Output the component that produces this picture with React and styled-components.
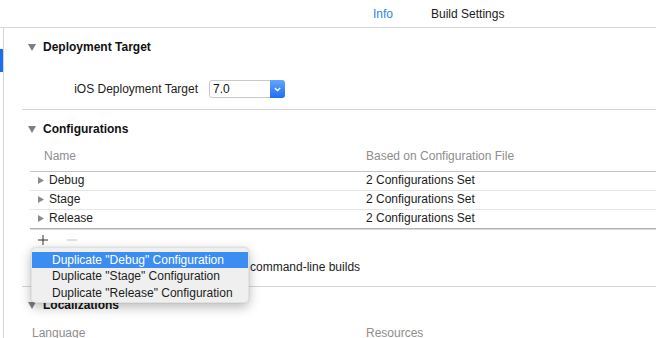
import React from 'react';
import styled, { createGlobalStyle } from 'styled-components';

const Global = createGlobalStyle`
  html, body { margin: 0; padding: 0; background: #fff; }
  body {
    font-family: "Liberation Sans", Arial, sans-serif;
    font-size: 12px;
    color: #1c1c1c;
  }
  #root { width: 656px; height: 338px; overflow: hidden; }
`;

const Window = styled.div`
  position: relative;
  width: 656px;
  height: 338px;
  overflow: hidden;
  display: flex;
  flex-direction: column;
  background: #fff;
`;

const TabBar = styled.div`
  height: 27px;
  flex-shrink: 0;
  border-bottom: 1px solid #d6d6d6;
  display: flex;
  align-items: center;
  gap: 38px;
  padding-left: 373px;
`;

const Tab = styled.div`
  font-size: 12px;
  color: ${p => (p.$active ? '#2b84f4' : '#1a1a1a')};
`;

const Body = styled.div`
  flex: 1;
  display: flex;
  min-height: 0;
`;

const Gutter = styled.div`
  width: 3px;
  flex-shrink: 0;
  border-right: 1px solid #d6d6d6;
  padding-top: 21px;
`;

const Marker = styled.div`
  width: 3px;
  height: 23px;
  background: #1a6ff0;
`;

const Content = styled.div`
  flex: 1;
  padding-left: 18px;
  display: flex;
  flex-direction: column;
`;

const Section = styled.section`
  padding-top: ${p => p.$pt}px;
  padding-bottom: ${p => p.$pb}px;
  border-bottom: ${p => (p.$last ? 'none' : '1px solid #d6d6d6')};
  display: flex;
  flex-direction: column;
`;

const SectionHeader = styled.div`
  height: 20px;
  display: flex;
  align-items: center;
  gap: 7px;
  padding-left: 6px;
`;

const SectionTitle = styled.div`
  font-weight: bold;
  font-size: 12px;
  color: #111;
`;

const DownTri = () => (
  <svg width="8" height="7" viewBox="0 0 8 7">
    <polygon points="0,0 8,0 4,7" fill="#7e7e7e" />
  </svg>
);

const RightTri = () => (
  <svg width="6" height="7" viewBox="0 0 6 7">
    <polygon points="0,0 6,3.5 0,7" fill="#8a8a8a" />
  </svg>
);

const FormRow = styled.div`
  margin-top: 23px;
  height: 18px;
  display: flex;
  align-items: center;
  gap: 11px;
`;

const FormLabel = styled.div`
  width: 176px;
  text-align: right;
  color: #1c1c1c;
`;

const Select = styled.div`
  width: 76px;
  height: 18px;
  box-sizing: border-box;
  border: 1px solid #c8c8c8;
  border-radius: 3px;
  display: flex;
  align-items: stretch;
  background: #fff;
`;

const SelectValue = styled.div`
  flex: 1;
  padding-left: 3px;
  display: flex;
  align-items: center;
  color: #111;
`;

const SelectButton = styled.div`
  width: 15px;
  margin: -1px -1px -1px 0;
  border-radius: 0 3px 3px 0;
  background: linear-gradient(#62a6fb, #1d6ff5);
  display: flex;
  align-items: center;
  justify-content: center;
`;

const ColumnHeader = styled.div`
  margin-top: ${p => p.$mt}px;
  height: 20px;
  display: grid;
  grid-template-columns: ${p => p.$first}px 1fr;
  align-items: center;
  color: #8e8e8e;
  padding-left: ${p => p.$pl}px;
`;

const Rows = styled.div`
  margin-top: 5px;
  margin-left: 8px;
  border-top: 1px solid #c4c4c4;
`;

const Row = styled.div`
  height: 18px;
  display: grid;
  grid-template-columns: 328px 1fr;
  align-items: center;
  padding-left: 8px;
  border-bottom: 1px solid ${p => (p.$last ? '#b2b2b2' : '#e6e6e6')};
  box-shadow: ${p => (p.$last ? '0 1px 0 #d9d9d9' : 'none')};
`;

const NameCell = styled.div`
  display: flex;
  align-items: center;
  gap: 5px;
  margin-top: -2px;
`;

const ValueCell = styled.div`
  margin-top: -2px;
`;

const Controls = styled.div`
  margin-top: 1px;
  height: 20px;
  display: flex;
  align-items: center;
  gap: 19px;
  padding-left: 16px;
`;

const Sign = ({ plus, color }) => (
  <svg width="10" height="10" viewBox="0 0 10 10">
    <line x1="0" y1="5" x2="10" y2="5" stroke={color} strokeWidth="1" />
    {plus && <line x1="5" y1="0" x2="5" y2="10" stroke={color} strokeWidth="1" />}
  </svg>
);

const CommandRow = styled.div`
  margin-top: 8px;
  height: 18px;
  display: flex;
  align-items: center;
  padding-left: 228px;
`;

const Menu = styled.div`
  position: absolute;
  left: 31px;
  top: 247px;
  width: 218px;
  height: 56px;
  box-sizing: border-box;
  padding: 4px 0 1px;
  border-radius: 5px;
  background: rgba(239, 239, 239, 0.98);
  border: 1px solid rgba(0, 0, 0, 0.06);
  box-shadow: 0 4px 12px rgba(0, 0, 0, 0.28), 0 0 1px rgba(0, 0, 0, 0.3);
  display: flex;
  flex-direction: column;
`;

const MenuItem = styled.div`
  height: 17px;
  display: flex;
  align-items: center;
  padding-left: 20px;
  font-size: 12px;
  color: ${p => (p.$active ? '#fff' : '#1c1c1c')};
  background: ${p => (p.$active ? '#3c8df2' : 'transparent')};
`;

const configs = ['Debug', 'Stage', 'Release'];

export default function App() {
  return (
    <Window>
      <Global />
      <TabBar>
        <Tab $active>Info</Tab>
        <Tab>Build Settings</Tab>
      </TabBar>
      <Body>
        <Gutter>
          <Marker />
        </Gutter>
        <Content>
          <Section $pt={9} $pb={11}>
            <SectionHeader>
              <DownTri />
              <SectionTitle>Deployment Target</SectionTitle>
            </SectionHeader>
            <FormRow>
              <FormLabel>iOS Deployment Target</FormLabel>
              <Select>
                <SelectValue>7.0</SelectValue>
                <SelectButton>
                  <svg width="7" height="5" viewBox="0 0 7 5">
                    <polyline points="0.8,1 3.5,3.6 6.2,1" fill="none" stroke="#fff" strokeWidth="1.4" />
                  </svg>
                </SelectButton>
              </Select>
            </FormRow>
          </Section>

          <Section $pt={9} $pb={10}>
            <SectionHeader>
              <DownTri />
              <SectionTitle>Configurations</SectionTitle>
            </SectionHeader>
            <ColumnHeader $mt={7} $pl={22} $first={322}>
              <div>Name</div>
              <div>Based on Configuration File</div>
            </ColumnHeader>
            <Rows>
              {configs.map((c, i) => (
                <Row key={c} $last={i === configs.length - 1}>
                  <NameCell>
                    <RightTri />
                    {c}
                  </NameCell>
                  <ValueCell>2 Configurations Set</ValueCell>
                </Row>
              ))}
            </Rows>
            <Controls>
              <Sign plus color="#333" />
              <Sign color="#c2c2c2" />
            </Controls>
            <CommandRow>command-line builds</CommandRow>
          </Section>

          <Section $pt={8} $pb={0} $last>
            <SectionHeader>
              <DownTri />
              <SectionTitle>Localizations</SectionTitle>
            </SectionHeader>
            <ColumnHeader $mt={8} $pl={10} $first={334}>
              <div>Language</div>
              <div>Resources</div>
            </ColumnHeader>
          </Section>
        </Content>
      </Body>
      <Menu>
        <MenuItem $active>Duplicate "Debug" Configuration</MenuItem>
        <MenuItem>Duplicate "Stage" Configuration</MenuItem>
        <MenuItem>Duplicate "Release" Configuration</MenuItem>
      </Menu>
    </Window>
  );
}
